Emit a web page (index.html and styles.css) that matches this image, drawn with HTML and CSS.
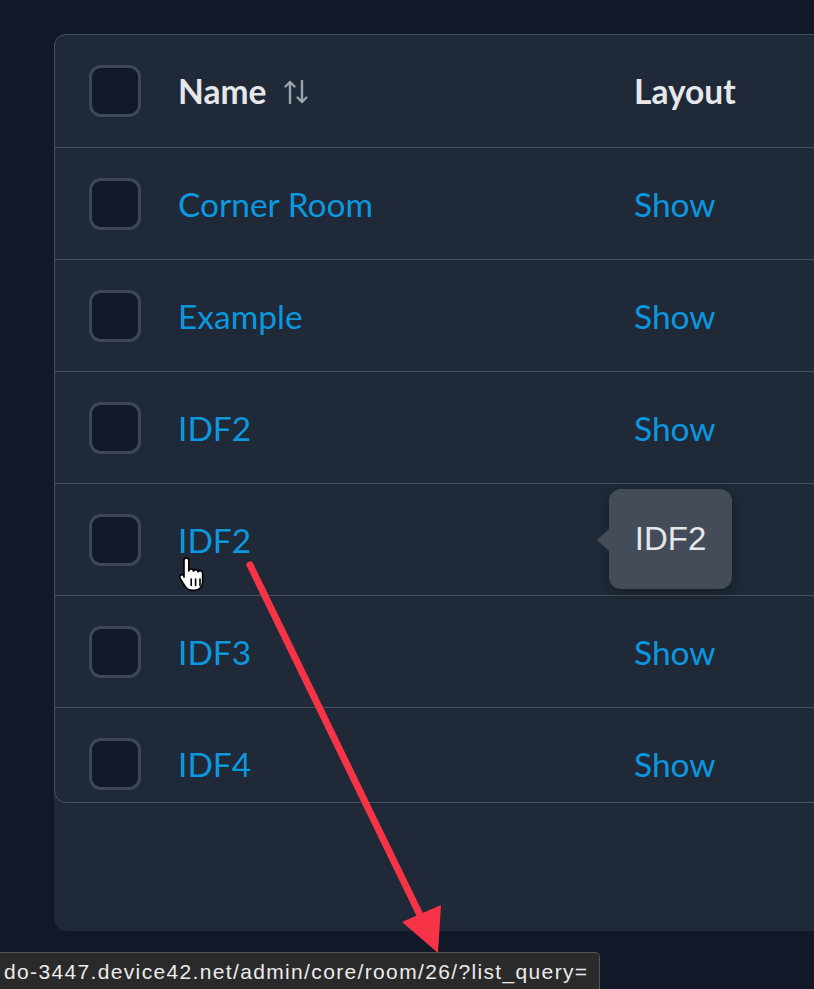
FILE: index.html
```html
<!DOCTYPE html>
<html lang="en">
<head>
<meta charset="utf-8">
<title>Rooms</title>
<link rel="stylesheet" href="styles.css">
</head>
<body>
<div class="card">
  <div class="table">
    <div class="row head">
      <span class="check"></span>
      <div class="cell name"><span class="th">Name</span>
        <svg class="sort" width="26" height="26" viewBox="0 0 26 26" fill="none" stroke="#9ca3af" stroke-width="2.4" stroke-linecap="round" stroke-linejoin="round">
          <path d="M7 24V3M2.5 7.5L7 3l4.5 4.5"/>
          <path d="M19 2v21M14.5 18.5L19 23l4.5-4.5"/>
        </svg>
      </div>
      <div class="cell layout"><span class="th">Layout</span></div>
    </div>
    <div class="row"><span class="check"></span><div class="cell name"><a class="link">Corner Room</a></div><div class="cell layout"><a class="link">Show</a></div></div>
    <div class="row"><span class="check"></span><div class="cell name"><a class="link">Example</a></div><div class="cell layout"><a class="link">Show</a></div></div>
    <div class="row"><span class="check"></span><div class="cell name"><a class="link">IDF2</a></div><div class="cell layout"><a class="link">Show</a></div></div>
    <div class="row hovered"><span class="check"></span><div class="cell name"><a class="link">IDF2</a></div><div class="cell layout"></div>
      <div class="tooltip">IDF2</div>
      <svg class="cursor" width="30" height="36" viewBox="0 0 30 36">
        <path d="M6 3.5c0-1.6 1.1-2.6 2.4-2.6S10.8 1.9 10.8 3.5V14c.4-1.3 1.3-2 2.4-2 1.3 0 2.2 1 2.3 2.2.4-1 1.300-1.6 2.3-1.6 1.3 0 2.2 1 2.3 2.3.4-.8 1.2-1.3 2.1-1.3 1.4 0 2.4 1.1 2.4 2.6v8.5c0 4.7-3 8.7-8.2 8.700h-2.2c-3.4 0-5.3-1.4-7-3.9L2.3 21.6c-.9-1.4-.6-2.8.5-3.5 1.1-.7 2.3-.3 3.1.7L6 20.3z" fill="#fff" stroke="#000" stroke-width="1.6" stroke-linejoin="round"/>
        <path d="M13.2 22v6.5M17.6 22v6.5M22 22v6.5" stroke="#000" stroke-width="1.6" stroke-linecap="round"/>
      </svg>
    </div>
    <div class="row"><span class="check"></span><div class="cell name"><a class="link">IDF3</a></div><div class="cell layout"><a class="link">Show</a></div></div>
    <div class="row"><span class="check"></span><div class="cell name"><a class="link">IDF4</a></div><div class="cell layout"><a class="link">Show</a></div></div>
  </div>
</div>
<svg class="annot" width="814" height="989" viewBox="0 0 814 989">
  <line x1="250" y1="565" x2="420" y2="915" stroke="#f73447" stroke-width="7" stroke-linecap="round"/>
  <polygon points="402,922 441,905 438,953" fill="#f73447"/>
</svg>
<div class="status">do-3447.device42.net/admin/core/room/26/?list_query=</div>
</body>
</html>
```

FILE: styles.css
```css
html, body {
  margin: 0;
  padding: 0;
  background: #111827;
  overflow: hidden;
  height: 989px;
}
body {
  padding: 34px 0 0 54px;
  box-sizing: border-box;
  font-family: "Lato", "Inter", sans-serif;
}
.card {
  width: 900px;
  height: 897px;
  background: #1f2937;
  border-radius: 12px;
  box-sizing: border-box;
}
.table {
  height: 769px;
  border: 1px solid #465060;
  border-radius: 12px;
  overflow: hidden;
  box-sizing: border-box;
}
.row {
  position: relative;
  display: flex;
  align-items: center;
  height: 112px;
  padding-left: 34px;
  border-bottom: 1px solid #465060;
  box-sizing: border-box;
}
.row.head {
  height: 113px;
}
.check {
  flex: none;
  width: 52px;
  height: 52px;
  box-sizing: border-box;
  border: 3px solid #3e4757;
  border-radius: 12px;
  background: #111827;
}
.cell {
  display: flex;
  align-items: center;
}
.name {
  width: 456px;
  margin-left: 37px;
  gap: 17px;
}
.th {
  color: #e5e7eb;
  font-weight: 700;
  font-size: 33.5px;
}
.sort {
  margin-top: 2px;
}
.link {
  color: #0c98df;
  font-size: 33.5px;
  text-decoration: none;
}
.tooltip {
  position: absolute;
  left: 554px;
  top: 5px;
  width: 123px;
  height: 100px;
  background: #444c59;
  border-radius: 12px;
  color: #e5e7eb;
  font-family: "Liberation Sans", Arial, sans-serif;
  font-size: 33px;
  display: flex;
  align-items: center;
  justify-content: center;
  box-shadow: 0 4px 12px rgba(0, 0, 0, 0.3);
}
.tooltip::before {
  content: "";
  position: absolute;
  left: -12px;
  top: 40px;
  border-style: solid;
  border-width: 11px 12px 11px 0;
  border-color: transparent #444c59 transparent transparent;
}
.cursor {
  position: absolute;
  left: 123px;
  top: 73px;
}
.annot {
  position: absolute;
  left: 0;
  top: 0;
  pointer-events: none;
}
.status {
  position: absolute;
  left: 0;
  top: 952px;
  width: 600px;
  height: 40px;
  box-sizing: border-box;
  padding: 7px 0 0 4px;
  background: #2a2a2a;
  border-top: 1px solid #555;
  border-right: 1px solid #555;
  border-top-right-radius: 5px;
  color: #ececec;
  font-family: "Liberation Sans", Arial, sans-serif;
  font-size: 21px;
  letter-spacing: 1.35px;
  white-space: nowrap;
}
```
